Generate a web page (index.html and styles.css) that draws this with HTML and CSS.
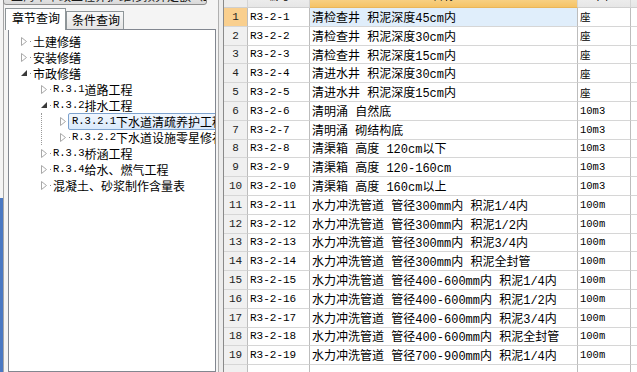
FILE: index.html
```html
<!DOCTYPE html>
<html lang="zh-CN">
<head>
<meta charset="utf-8">
<title>定额查询</title>
<link rel="stylesheet" href="styles.css">
</head>
<body>
<div class="app">
  <aside class="left">
    <div class="rail"></div>
    <div class="pane">
      <div class="combo">上海市市政工程养护维修预算定额（2013）</div>
      <div class="tabs">
        <div class="tab active">章节查询</div>
        <div class="tab second">条件查询</div>
      </div>
      <div class="tree">
        <div class="node l1"><span class="tri"><svg width="6" height="9" viewBox="0 0 6 9"><polygon points="0.5,0.5 5.5,4.5 0.5,8.5" fill="#fff" stroke="#a8a8a8"/></svg></span><span class="label">土建修缮</span></div>
        <div class="node l1"><span class="tri"><svg width="6" height="9" viewBox="0 0 6 9"><polygon points="0.5,0.5 5.5,4.5 0.5,8.5" fill="#fff" stroke="#a8a8a8"/></svg></span><span class="label">安装修缮</span></div>
        <div class="node l1"><span class="tri"><svg width="6" height="6" viewBox="0 0 6 6"><polygon points="6,0 6,6 0,6" fill="#3a3a3a"/></svg></span><span class="label">市政修缮</span></div>
        <div class="node l2"><span class="tri"><svg width="6" height="9" viewBox="0 0 6 9"><polygon points="0.5,0.5 5.5,4.5 0.5,8.5" fill="#fff" stroke="#a8a8a8"/></svg></span><span class="label"><span class="cd">R.3.1</span>道路工程</span></div>
        <div class="node l2"><span class="tri"><svg width="6" height="6" viewBox="0 0 6 6"><polygon points="6,0 6,6 0,6" fill="#3a3a3a"/></svg></span><span class="label"><span class="cd">R.3.2</span>排水工程</span></div>
        <div class="group">
          <div class="node l3"><span class="tri"><svg width="6" height="9" viewBox="0 0 6 9"><polygon points="0.5,0.5 5.5,4.5 0.5,8.5" fill="#fff" stroke="#a8a8a8"/></svg></span><span class="label selected"><span class="cd">R.3.2.1</span>下水道清疏养护工程</span></div>
          <div class="node l3"><span class="tri"><svg width="6" height="9" viewBox="0 0 6 9"><polygon points="0.5,0.5 5.5,4.5 0.5,8.5" fill="#fff" stroke="#a8a8a8"/></svg></span><span class="label"><span class="cd">R.3.2.2</span>下水道设施零星修补</span></div>
        </div>
        <div class="node l2"><span class="tri"><svg width="6" height="9" viewBox="0 0 6 9"><polygon points="0.5,0.5 5.5,4.5 0.5,8.5" fill="#fff" stroke="#a8a8a8"/></svg></span><span class="label"><span class="cd">R.3.3</span>桥涵工程</span></div>
        <div class="node l2"><span class="tri"><svg width="6" height="9" viewBox="0 0 6 9"><polygon points="0.5,0.5 5.5,4.5 0.5,8.5" fill="#fff" stroke="#a8a8a8"/></svg></span><span class="label"><span class="cd">R.3.4</span>给水、燃气工程</span></div>
        <div class="node l2"><span class="tri"><svg width="6" height="9" viewBox="0 0 6 9"><polygon points="0.5,0.5 5.5,4.5 0.5,8.5" fill="#fff" stroke="#a8a8a8"/></svg></span><span class="label">混凝土、砂浆制作含量表</span></div>
      </div>
    </div>
  </aside>
  <div class="splitter"></div>
  <main class="grid">
    <div class="row head">
      <div class="c num"></div><div class="c code">编号</div><div class="c name">名称</div><div class="c unit">单位</div><div class="c extra"></div>
    </div>
    <div class="row"><div class="c num cur">1</div><div class="c code">R3-2-1</div><div class="c name cur">清检查井 积泥深度45cm内</div><div class="c unit">座</div><div class="c extra"></div></div>
    <div class="row"><div class="c num">2</div><div class="c code">R3-2-2</div><div class="c name">清检查井 积泥深度30cm内</div><div class="c unit">座</div><div class="c extra"></div></div>
    <div class="row"><div class="c num">3</div><div class="c code">R3-2-3</div><div class="c name">清检查井 积泥深度15cm内</div><div class="c unit">座</div><div class="c extra"></div></div>
    <div class="row"><div class="c num">4</div><div class="c code">R3-2-4</div><div class="c name">清进水井 积泥深度30cm内</div><div class="c unit">座</div><div class="c extra"></div></div>
    <div class="row"><div class="c num">5</div><div class="c code">R3-2-5</div><div class="c name">清进水井 积泥深度15cm内</div><div class="c unit">座</div><div class="c extra"></div></div>
    <div class="row"><div class="c num">6</div><div class="c code">R3-2-6</div><div class="c name">清明涌 自然底</div><div class="c unit">10m3</div><div class="c extra"></div></div>
    <div class="row"><div class="c num">7</div><div class="c code">R3-2-7</div><div class="c name">清明涌 砌结构底</div><div class="c unit">10m3</div><div class="c extra"></div></div>
    <div class="row"><div class="c num">8</div><div class="c code">R3-2-8</div><div class="c name">清渠箱 高度 120cm以下</div><div class="c unit">10m3</div><div class="c extra"></div></div>
    <div class="row"><div class="c num">9</div><div class="c code">R3-2-9</div><div class="c name">清渠箱 高度 120-160cm</div><div class="c unit">10m3</div><div class="c extra"></div></div>
    <div class="row"><div class="c num">10</div><div class="c code">R3-2-10</div><div class="c name">清渠箱 高度 160cm以上</div><div class="c unit">10m3</div><div class="c extra"></div></div>
    <div class="row"><div class="c num">11</div><div class="c code">R3-2-11</div><div class="c name">水力冲洗管道 管径300mm内 积泥1/4内</div><div class="c unit">100m</div><div class="c extra"></div></div>
    <div class="row"><div class="c num">12</div><div class="c code">R3-2-12</div><div class="c name">水力冲洗管道 管径300mm内 积泥1/2内</div><div class="c unit">100m</div><div class="c extra"></div></div>
    <div class="row"><div class="c num">13</div><div class="c code">R3-2-13</div><div class="c name">水力冲洗管道 管径300mm内 积泥3/4内</div><div class="c unit">100m</div><div class="c extra"></div></div>
    <div class="row"><div class="c num">14</div><div class="c code">R3-2-14</div><div class="c name">水力冲洗管道 管径300mm内 积泥全封管</div><div class="c unit">100m</div><div class="c extra"></div></div>
    <div class="row"><div class="c num">15</div><div class="c code">R3-2-15</div><div class="c name">水力冲洗管道 管径400-600mm内 积泥1/4内</div><div class="c unit">100m</div><div class="c extra"></div></div>
    <div class="row"><div class="c num">16</div><div class="c code">R3-2-16</div><div class="c name">水力冲洗管道 管径400-600mm内 积泥1/2内</div><div class="c unit">100m</div><div class="c extra"></div></div>
    <div class="row"><div class="c num">17</div><div class="c code">R3-2-17</div><div class="c name">水力冲洗管道 管径400-600mm内 积泥3/4内</div><div class="c unit">100m</div><div class="c extra"></div></div>
    <div class="row"><div class="c num">18</div><div class="c code">R3-2-18</div><div class="c name">水力冲洗管道 管径400-600mm内 积泥全封管</div><div class="c unit">100m</div><div class="c extra"></div></div>
    <div class="row"><div class="c num">19</div><div class="c code">R3-2-19</div><div class="c name">水力冲洗管道 管径700-900mm内 积泥1/4内</div><div class="c unit">100m</div><div class="c extra"></div></div>
    <div class="row"><div class="c num"></div><div class="c code"></div><div class="c name"></div><div class="c unit"></div><div class="c extra"></div></div>
  </main>
</div>
</body>
</html>
```

FILE: styles.css
```css
* { box-sizing: border-box; }
html, body { margin: 0; padding: 0; }
body {
  width: 637px;
  height: 372px;
  overflow: hidden;
  background: #f4f4f4;
  font-family: "Noto Sans CJK SC", sans-serif;
  font-size: 12px;
  color: #000;
}
.app { display: flex; height: 372px; }

/* left panel */
.left { width: 218px; flex: none; display: flex; }
.rail {
  width: 3px;
  flex: none;
  background: linear-gradient(to bottom, #f4f4f4 0, #f4f4f4 198px, #4a78c2 198px);
}
.pane {
  flex: 1;
  min-width: 0;
  display: flex;
  flex-direction: column;
  border-left: 1px solid #a6a6a6;
}
.combo {
  flex: none;
  height: 18px;
  margin-top: -13px;
  margin-left: -1px;
  width: 204px;
  border: 1px solid #8d8d8d;
  border-radius: 3px;
  background: linear-gradient(#f6f6f6, #d9d9d9);
  padding-left: 7px;
  line-height: 16px;
  white-space: nowrap;
  overflow: hidden;
  color: #1a1a1a;
}
.tabs {
  flex: none;
  display: flex;
  align-items: flex-end;
  height: 21px;
  margin-top: 3px;
  padding-left: 1px;
}
.tab {
  position: relative;
  border: 1px solid #8e9598;
  border-bottom: 0;
  white-space: nowrap;
}
.tab.active {
  z-index: 2;
  width: 61px;
  height: 22px;
  margin-bottom: -1px;
  padding-left: 6px;
  line-height: 17px;
  background: #fff;
}
.tab.second {
  width: 58px;
  height: 18px;
  padding-left: 5px;
  line-height: 16px;
  background: linear-gradient(#f8f8f8, #e4e4e4);
}
.tree {
  flex: 1;
  min-height: 0;
  width: 208px;
  margin-left: 4px;
  border: 1px solid #828790;
  background: #fff;
  padding-top: 3px;
  overflow: hidden;
}
.node {
  display: flex;
  align-items: center;
  height: 16px;
  white-space: nowrap;
}
.node.l1 { padding-left: 12px; }
.node.l2 { padding-left: 32px; }
.group { margin-left: 32px; border-left: 1px dotted #9a9a9a; }
.group .node.l3 { padding-left: 18px; }
.tri {
  width: 8px;
  flex: none;
  display: flex;
  align-items: center;
}
.tri svg { display: block; }
.label {
  display: flex;
  align-items: center;
  height: 16px;
  padding: 0 3px;
  border: 1px solid transparent;
  background: linear-gradient(#8a8a8a, #8a8a8a) no-repeat 0 50% / 1px 1px;
}
.label.selected {
  height: 17px;
  border-color: #7da2ce;
  border-radius: 2px;
  background: linear-gradient(#f1f7fe, #d9e9fb);
}
.cd { font-family: "Liberation Mono", monospace; font-size: 10.5px; }

/* splitter */
.splitter {
  width: 6px;
  flex: none;
  border-left: 1px solid #b0b0b0;
  border-right: 1px solid #8a8a8a;
  background: #ececec;
}

/* grid */
.grid {
  flex: 1;
  min-width: 0;
  display: flex;
  flex-direction: column;
  background: #fff;
}
.row { display: flex; flex: none; height: 18.8px; }
.c {
  display: flex;
  align-items: center;
  white-space: nowrap;
  overflow: hidden;
  border-right: 1px solid #bdbdbd;
  border-bottom: 1px solid #d6d6d6;
}
.num {
  width: 24px;
  flex: none;
  justify-content: center;
  background: #f0f0f0;
  color: #222;
  font-family: "Liberation Mono", monospace;
  font-size: 11px;
}
.code {
  width: 62px;
  flex: none;
  padding-left: 2px;
  font-family: "Liberation Mono", monospace;
  font-size: 11px;
}
.name {
  width: 268px;
  flex: none;
  padding-left: 2px;
  font-family: "Liberation Mono", "Noto Sans CJK SC", monospace;
  font-size: 12px;
}
.unit {
  width: 53px;
  flex: none;
  padding-left: 2px;
  font-family: "Liberation Mono", "Noto Sans CJK SC", monospace;
  font-size: 10.5px;
}
.extra { flex: 1; border-right: 0; }
.num.cur { background: #f9cf8e; }
.name.cur { background: #e0eefb; }

.row.head { height: 21px; margin-top: -13px; }
.head .c {
  justify-content: center;
  padding: 0 0 6px;
  font-family: "Noto Sans CJK SC", sans-serif;
  font-size: 12px;
  background: linear-gradient(#f7f7f7, #e6e6e6);
  border-right-color: #d4d4d4;
  border-bottom-color: #cfcfcf;
}
.head .num { background: #ececec; }
.head .name {
  background: linear-gradient(#fde7b6, #f5c366);
  border-bottom-color: #e9b65a;
}
```
